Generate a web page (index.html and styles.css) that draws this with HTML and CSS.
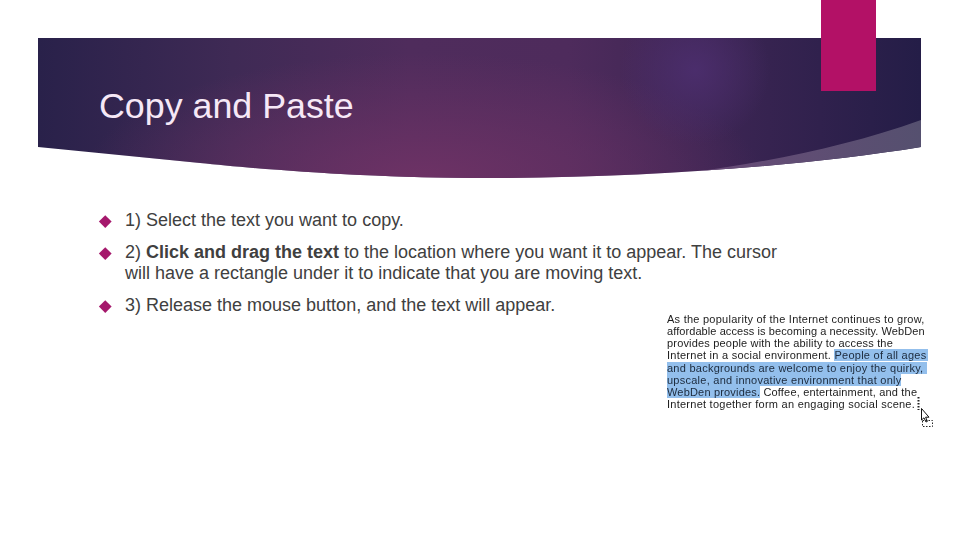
FILE: index.html
```html
<!DOCTYPE html>
<html lang="en">
<head>
  <meta charset="UTF-8">
  <title>Copy and Paste</title>
  <link rel="stylesheet" href="styles.css">
</head>
<body>
  <div class="slide">
    <!-- header band -->
    <header class="band">
      <svg class="swoosh" width="883" height="140" viewBox="0 0 883 140">
        <defs>
          <linearGradient id="swooshFill" x1="0" y1="0" x2="1" y2="0">
            <stop offset="0" stop-color="#6a4a78"/>
            <stop offset="1" stop-color="#55506f"/>
          </linearGradient>
        </defs>
        <path d="M883 82C810 108 740 122 650 135L650 140L883 140Z" fill="url(#swooshFill)"/>
      </svg>
      <h1>Copy and Paste</h1>
    </header>
    <div class="tab"></div>

    <ul class="points">
      <li>1) Select the text you want to copy.</li>
      <li>2) <b>Click and drag the text</b> to the location where you want it to appear. The cursor will have a rectangle under it to indicate that you are moving text.</li>
      <li>3) Release the mouse button, and the text will appear.</li>
    </ul>

    <!-- screenshot of the word processor -->
    <div class="shot">
      <div class="line">As the popularity of the Internet continues to grow,</div>
      <div class="line tight">affordable access is becoming a necessity. WebDen</div>
      <div class="line snug">provides people with the ability to access the</div>
      <div class="line">Internet in a social environment. <mark class="sel-end">People of all ages</mark></div>
      <div class="line"><mark class="sel-full">and backgrounds are welcome to enjoy the quirky,</mark></div>
      <div class="line"><mark>upscale, and innovative environment that only</mark></div>
      <div class="line snug"><mark>WebDen provides.</mark> Coffee, entertainment, and the</div>
      <div class="line">Internet together form an engaging social scene.</div>
      <svg class="cursor" width="17" height="31" viewBox="0 0 17 31">
        <path d="M1.5 0V13" stroke="#222" stroke-width="2" stroke-dasharray="1.5 1.5" fill="none"/>
        <path d="M4.5 11.5V23L7 20.8L9 25L10.4 24.4L8.6 20.2H12Z" fill="#fff" stroke="#111" stroke-width="1"/>
        <rect x="5.5" y="23.5" width="10" height="6" fill="none" stroke="#222" stroke-dasharray="1.5 1.5"/>
      </svg>
    </div>
  </div>
</body>
</html>
```

FILE: styles.css
```css
/* page */
body {
  margin: 0;
  background-color: #fff;
  font-family: "Liberation Sans", Arial, sans-serif;
}

.slide {
  position: relative;
  width: 960px;
  height: 540px;
  padding-top: 38px;
  box-sizing: border-box;
  overflow: hidden;
}

/* header band */
.band {
  position: relative;
  width: 883px;
  height: 140px;
  margin-left: 38px;
  box-sizing: border-box;
  padding: 48px 0 0 61px;
  background:
    radial-gradient(ellipse 75px 75px at 657px 32px, rgba(76, 46, 110, 0.9), rgba(76, 46, 110, 0)),
    radial-gradient(ellipse 340px 125px at 385px 140px, #6d3265 0%, rgba(109, 50, 101, 0) 100%),
    linear-gradient(90deg, #29214a 0%, #3f2a55 22%, #4f2c5c 42%, #4e2b5c 60%, #241d47 100%);
  clip-path: path("M0 109L162 125C220 131 330 140 450 140C600 140 760 129 883 109V0H0Z");
}

.band h1 {
  position: relative;
  margin: 0;
  font-size: 35.8px;
  font-weight: normal;
  line-height: 40px;
  color: #f6e8f6;
}

.swoosh {
  position: absolute;
  top: 0;
  left: 0;
}

.tab {
  position: absolute;
  top: 0;
  left: 821px;
  width: 55px;
  height: 91px;
  background-color: #b31166;
}

/* bullets */
.points {
  list-style: none;
  margin: 32px 0 0;
  padding: 0 0 0 125px;
  width: 665px;
  color: #404040;
  font-size: 18px;
  line-height: 21px;
}

.points li {
  position: relative;
  margin-bottom: 11px;
}

.points li::before {
  content: "";
  position: absolute;
  top: 7px;
  left: -24px;
  width: 8.5px;
  height: 8.5px;
  background-color: #a5186c;
  transform: rotate(45deg);
}

/* screenshot */
.shot {
  position: relative;
  width: 262px;
  margin: -14px 0 0 667px;
  font-size: 11px;
  line-height: 12.15px;
  letter-spacing: 0.25px;
  color: #1c1c1c;
  white-space: nowrap;
}

.line {
  filter: blur(0.3px);
}

.tight {
  letter-spacing: 0.08px;
}

.snug {
  letter-spacing: 0.18px;
}

.shot mark {
  background-color: #93bfec;
  color: #1c2a3c;
}

.shot .sel-end {
  padding-right: 2px;
}

.shot .sel-full {
  padding-right: 4px;
}

.cursor {
  position: absolute;
  top: 84px;
  left: 250px;
}
```
